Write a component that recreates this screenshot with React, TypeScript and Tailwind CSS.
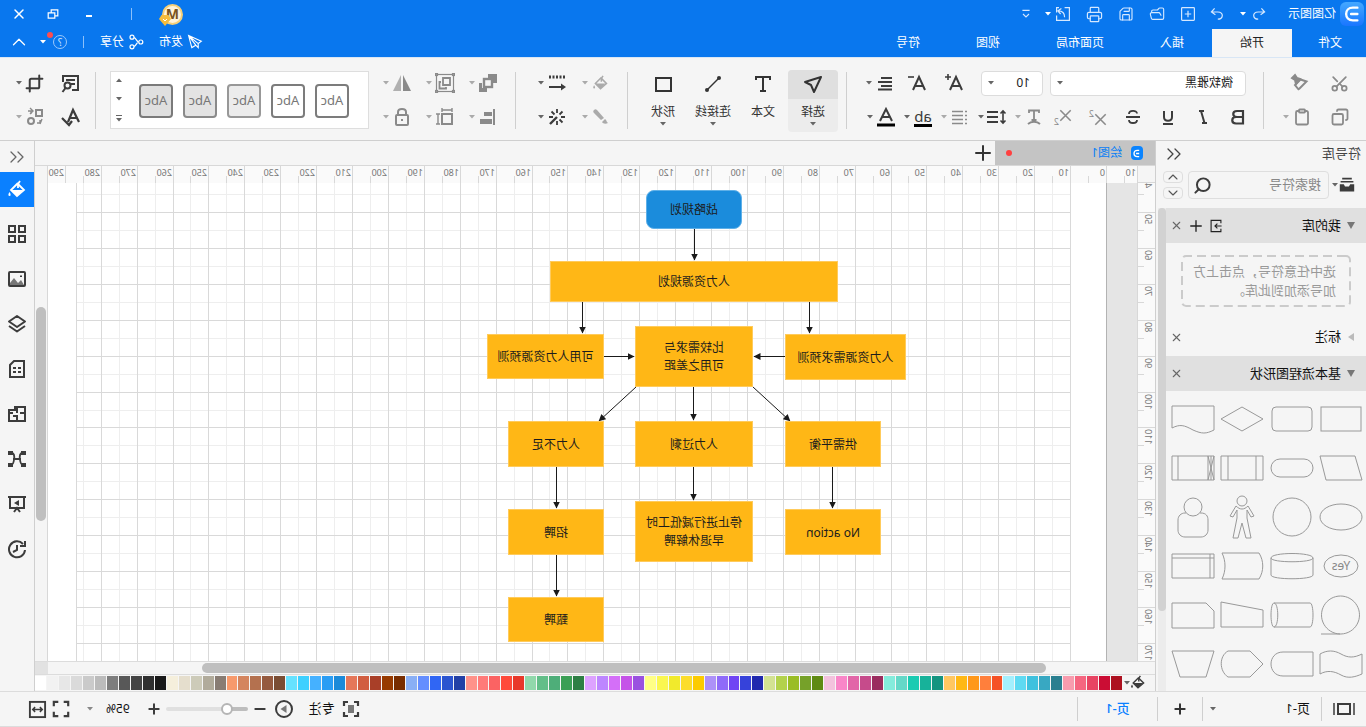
import type { ReactNode } from "react";
import {
  ChevronDown,
  ChevronsLeft,
  ChevronUp,
  Clipboard,
  Copy,
  Crop,
  FolderOpen,
  Minus,
  Plus,
  Printer,
  Save,
  Scissors,
  Search,
  X,
} from "lucide-react";

type IconProps = { children: ReactNode; className?: string; width?: number };

// All hand drawn icons share a 20x20 grid
function Icon({ children, className = "size-5", width = 2 }: IconProps) {
  return (
    <svg
      viewBox="0 0 20 20"
      fill="none"
      stroke="currentColor"
      strokeWidth={width}
      className={`shrink-0 ${className}`}
      aria-hidden="true"
    >
      {children}
    </svg>
  );
}

function Caret({ className = "text-[#666]" }: { className?: string }) {
  return (
    <svg
      viewBox="0 0 6 4"
      className={`w-[6px] h-[4px] shrink-0 ${className}`}
      fill="currentColor"
      aria-hidden="true"
    >
      <path d="M0 0h6L3 3.5z" />
    </svg>
  );
}

function Divider() {
  return <div className="w-px h-[57px] bg-[#cfcfcf] shrink-0" />;
}

/* ---------- icons ---------- */

const BucketIcon = ({ className }: { className?: string }) => (
  <Icon className={className} width={1.8}>
    <path d="M9 3l7 7-6 6-7-6 6-6" />
    <path d="M4 10h12l-6 6z" fill="currentColor" stroke="none" />
    <path d="M9 4L7 1M9 4v4" />
    <path d="M17.500 12c1.500 2 1.500 4 0 4s-1.500-2 0-4z" fill="currentColor" stroke="none" />
  </Icon>
);

const PainterIcon = () => (
  <Icon width={2}>
    <path d="M11 16L3.500 8.500 9.500 6.500 15 12l-4 5" />
    <path d="M10 6l3-1 2-3 3 3-3 2-1 4z" fill="currentColor" />
  </Icon>
);

const UndoIcon = () => (
  <Icon className="size-4" width={1.5}>
    <path d="M7 3L3 7.500l5 3.500M3.500 7.500H11c8 0 7 9 0 9" />
  </Icon>
);

const RedoIcon = () => (
  <Icon className="size-4" width={1.5}>
    <path d="M13 3l4 4.500-5 3.500M16.500 7.500H9c-8 0-7 9 0 9" />
  </Icon>
);

const NewIcon = () => (
  <Icon className="size-4" width={1.5}>
    <rect x="2" y="2" width="16" height="16" rx="1" />
    <path d="M10 6v8M6 10h8" />
  </Icon>
);

const ExportIcon = () => (
  <Icon className="size-4" width={1.5}>
    <path d="M8 2H2v16h16v-6M18 8V2h-3" />
    <path d="M8 14c0-6 3-8 8-8M12 3l4.500 3L13 10" />
  </Icon>
);

const SendIcon = () => (
  <Icon className="size-4" width={1.4}>
    <path d="M2 9l16-7-4 15-5-3-3 3v-5zM6 12l12-10-9 12" />
  </Icon>
);

const ShareIcon = () => (
  <Icon className="size-4" width={1.5}>
    <circle cx="4" cy="10" r="2.500" />
    <circle cx="15" cy="4" r="2.500" />
    <circle cx="15" cy="16" r="2.500" />
    <path d="M6.500 10c3 0 3-5 6-5.500M6.500 10c3 0 3 5 6 5.500" />
  </Icon>
);

const AlignTextIcon = () => (
  <Icon width={2}>
    <path d="M3 5h11M3 9h14M3 13h11M3 16.500h14" />
  </Icon>
);

const LineSpacingIcon = () => (
  <Icon width={2}>
    <path d="M9 5h11M9 10h11M9 15h11" />
    <path d="M4 4v12M1.500 6.500L4 4l2.500 2.500M1.500 13.500L4 16l2.500-2.500" strokeWidth={1.6} />
  </Icon>
);

const BulletsIcon = () => (
  <Icon width={1.6}>
    <path d="M7 4.500h11M7 8.500h11M7 12.500h11M7 16.500h11M3 4.500h2M3 8.500h2M3 12.500h2M3 16.500h2" />
  </Icon>
);

const TextArcIcon = () => (
  <Icon width={1.8}>
    <path d="M5 6V3.500h10V6M10 3.500V13M7.500 13h5M4 17c3-3 9-3 12 0" />
  </Icon>
);

const TextIcon = () => (
  <Icon width={2}>
    <path d="M3 6V3h14v3M10 3v14M7 17h6" />
  </Icon>
);

const SelectIcon = () => (
  <Icon width={2}>
    <path d="M2 3l16 5-6 3-3 7z" strokeLinejoin="round" />
  </Icon>
);

const ConnectorIcon = () => (
  <Icon width={1.5}>
    <path d="M4 4l12 12" />
    <circle cx="4" cy="4" r="2" fill="currentColor" stroke="none" />
    <circle cx="16" cy="16" r="2" fill="currentColor" stroke="none" />
  </Icon>
);

const RectIcon = () => (
  <Icon width={2}>
    <rect x="2" y="4" width="15" height="13" />
  </Icon>
);

const BrushIcon = () => (
  <Icon width={0}>
    <path d="M17 3c1 1 1 2 0 3l-7 7-3-2 7-8c1-1 2-1 3 0zM6 12l3 3c-1 2-4 2-6 1 2-1 1-3 3-4z" fill="currentColor" />
  </Icon>
);

const LineStyleIcon = () => (
  <Icon width={2}>
    <path d="M18 4H2" strokeWidth={3} strokeDasharray="2 1.500" />
    <path d="M18 14H4" />
    <path d="M6 10.500v7L1 14z" fill="currentColor" stroke="none" />
  </Icon>
);

const MagicIcon = () => (
  <Icon width={1.8}>
    <path d="M10 2v4M10 14v4M2 10h4M14 10h4M4.500 15.500l3-3M12.500 7.500l3-3M4.500 4.500l3 3" />
    <path d="M10 10l7 7" strokeWidth={2.4} />
  </Icon>
);

const ArrangeIcon = () => (
  <Icon width={2.4}>
    <rect x="6" y="6" width="8" height="8" />
    <path d="M1 1h9v4H5v5H1zM11 15h5v-5h3v9h-8z" fill="currentColor" stroke="none" />
  </Icon>
);

const GroupIcon = () => (
  <Icon width={1.2}>
    <rect x="1.500" y="1.500" width="17" height="17" />
    <g fill="#f5f5f5">
      <rect x="0.500" y="0.500" width="2" height="2" />
      <rect x="17.500" y="0.500" width="2" height="2" />
      <rect x="0.500" y="17.500" width="2" height="2" />
      <rect x="17.500" y="17.500" width="2" height="2" />
    </g>
    <path d="M5 5h7v7H5zM14 9h1.500v6.500H9V14" strokeWidth={1.8} />
  </Icon>
);

const FlipIcon = () => (
  <Icon width={0}>
    <path d="M9 2v16H1z" fill="#8a8a8a" />
    <path d="M11 2v16h8z" fill="#b0b0b0" />
  </Icon>
);

const AlignLeftEdgeIcon = () => (
  <Icon width={0}>
    <path d="M3 2h2v16H3zM6 5h8v4H6zM6 12h12v5H6z" fill="currentColor" />
  </Icon>
);

const SizeIcon = () => (
  <Icon width={2}>
    <rect x="3" y="7" width="10" height="10" />
    <path d="M3 1v4M13 1v4M3 3h10M15 7h4M15 17h4M17 7v10" strokeWidth={1.4} />
  </Icon>
);

const LockIcon = () => (
  <Icon width={2}>
    <rect x="4" y="8" width="12" height="10" rx="1" />
    <path d="M6 8V5c0-4 8-4 8 0v3M10 12v2" />
  </Icon>
);

const FindIcon = () => (
  <Icon width={2}>
    <path d="M9 17H3V3h15v6M6 7h9M6 11h4" />
    <circle cx="13.500" cy="12.500" r="3" />
    <path d="M15.500 15l3 4" />
  </Icon>
);

const SpellIcon = () => (
  <Icon width={2.2}>
    <path d="M2 15L8 3l5 12M4 11h8M9 14l3 4 7-7" />
  </Icon>
);

const SwapIcon = () => (
  <Icon width={2}>
    <rect x="3" y="3" width="6" height="6" />
    <circle cx="14" cy="14" r="3" />
    <path d="M14 7V4h3M15 1l-3 3 3 3M5 13v3h3M3 12l2 5" strokeWidth={1.4} />
  </Icon>
);

const ImportIcon = () => (
  <Icon className="size-[14px]" width={1.6}>
    <path d="M3 6V2h14v16H3v-4M2 10h9M8 6.500l3.500 3.500L8 13.500" />
  </Icon>
);

const DrawerIcon = () => (
  <Icon className="w-4 h-4" width={2}>
    <path d="M4 2h12M2 6h16" />
    <path d="M1 9h5l1.500 3h5L14 9h5v9H1z" fill="currentColor" stroke="none" />
  </Icon>
);

/* ---------- header ---------- */

function TitleBar() {
  const quick = [
    { label: "新建", icon: <NewIcon /> },
    { label: "打开", icon: <FolderOpen size={16} strokeWidth={1.7} /> },
    { label: "保存", icon: <Save size={16} strokeWidth={1.7} /> },
    { label: "打印", icon: <Printer size={17} strokeWidth={1.7} /> },
  ];
  return (
    <div className="flex items-center h-7 text-[#d5e8ff]">
      <div className="ml-[2px] size-6 rounded-md bg-linear-to-b from-[#45a8ff] to-[#1a75ff] flex items-center justify-center">
        <Icon className="size-[18px] text-white" width={2.6}>
          <path d="M4 3h5c10 0 10 14 0 14H4M4 10h7" strokeLinecap="round" />
        </Icon>
      </div>
      <h1 className="ml-1 text-white">亿图图示</h1>
      <button aria-label="撤销" className="ml-[21px]">
        <UndoIcon />
      </button>
      <Caret className="ml-[5px] text-white" />
      <button aria-label="恢复" className="ml-[15px]">
        <RedoIcon />
      </button>
      <div className="ml-[13px] flex items-center gap-[15px]">
        {quick.map((item) => (
          <button key={item.label} aria-label={item.label}>
            {item.icon}
          </button>
        ))}
        <button aria-label="导出" className="flex items-center gap-[4px]">
          <ExportIcon />
          <Caret className="text-white" />
        </button>
      </div>
      <button aria-label="更多" className="ml-[13px]">
        <Icon className="size-3" width={1.8}>
          <path d="M4 4h12M5 10l5 5 5-5" />
        </Icon>
      </button>

      {/* Account + window controls */}
      <div className="ml-auto flex items-center pr-[11px] text-white">
        <button
          aria-label="账户"
          className="relative size-[21px] rounded-full border-2 border-[#f5cf78] bg-[#fff3da] text-[#7a5520] font-bold text-sm leading-none"
        >
          M
          <svg viewBox="0 0 12 12" className="absolute -right-[5px] -bottom-[3px] size-[12px]">
            <path d="M2.500 1h7L12 5l-6 7-6-7z" fill="#f6bd3d" />
            <path d="M4 5l2 2 2-2" fill="none" stroke="#fff" />
          </svg>
        </button>
        <span className="ml-[30px] w-px h-3 bg-[#8cc0fa]" />
        <button aria-label="最小化" className="ml-[36px] flex w-3 justify-center">
          <span className="w-[6px] h-[2px] mt-1 bg-white" />
        </button>
        <button aria-label="还原" className="ml-[24px]">
          <Icon className="size-3" width={2}>
            <path d="M6 13H2V3h11v4M7 8h11v9H7z" />
          </Icon>
        </button>
        <button aria-label="关闭" className="ml-[20px]">
          <X size={16} strokeWidth={2.2} />
        </button>
      </div>
    </div>
  );
}

function TabBar() {
  const tabs = ["文件", "开始", "插入", "页面布局", "视图", "符号"];
  return (
    <nav className="flex items-stretch h-[29px] pt-px text-white">
      {tabs.map((tab, index) => (
        <button
          key={tab}
          className={
            index === 1
              ? "px-7 bg-[#f5f5f5] text-[#222]"
              : index === 0
                ? "pl-6 pr-[26px]"
                : "px-7"
          }
        >
          {tab}
        </button>
      ))}
      <div className="ml-auto flex items-center pr-[8px] pb-[3px]">
        <button className="flex items-center gap-[4px]">
          <SendIcon />
          发布
        </button>
        <button className="ml-[15px] flex items-center gap-[4px]">
          <ShareIcon />
          分享
        </button>
        <span className="ml-[16px] w-px h-3 bg-[#8cc0fa]" />
        <button
          aria-label="帮助"
          className="relative ml-[16px] size-[14px] rounded-full border border-[#9cc9fb] text-[10px] leading-none text-[#d5e8ff]"
        >
          ?
          <span className="absolute -right-[7px] -top-[4px] size-[6px] rounded-full bg-[#ff4d4f]" />
        </button>
        <Caret className="ml-[7px] text-white" />
        <button aria-label="收起功能区" className="ml-[10px]">
          <ChevronUp size={22} strokeWidth={1.4} />
        </button>
      </div>
    </nav>
  );
}

/* ---------- ribbon ---------- */

type ToolProps = {
  label: string;
  children: ReactNode;
  caret?: boolean;
  dim?: boolean;
  className?: string;
};

function Tool({ label, children, caret, dim, className = "" }: ToolProps) {
  return (
    <button
      aria-label={label}
      className={`flex items-center gap-[3px] h-[34px] shrink-0 ${dim ? "text-[#8a8a8a]" : "text-[#3c3c3c]"} ${className}`}
    >
      <span className="w-5 flex justify-center">{children}</span>
      {caret && <Caret className={dim ? "text-[#aaa]" : "text-[#666]"} />}
    </button>
  );
}

function BigTool({
  label,
  icon,
  active,
  caret,
}: {
  label: string;
  icon: ReactNode;
  active?: boolean;
  caret?: boolean;
}) {
  return (
    <button
      className={`w-[50px] h-[62px] flex flex-col items-center rounded-sm overflow-hidden text-[#333] ${active ? "bg-[#ececec]" : ""}`}
    >
      <span
        className={`w-full h-[29px] flex items-center justify-center shrink-0 ${active ? "bg-[#dfdfdf]" : ""}`}
      >
        {icon}
      </span>
      <span className="mt-[5px] leading-4">{label}</span>
      {caret && <Caret className="mt-[2px] text-[#666]" />}
    </button>
  );
}

function FontGroup() {
  return (
    <div className="flex flex-col w-[416px] pl-[17px] shrink-0">
      <div className="flex items-center h-[34px]">
        <label className="relative w-[196px]">
          <select
            aria-label="字体"
            className="w-full h-[25px] appearance-none bg-white border border-[#dcdcdc] rounded-sm pl-3 text-[#222]"
          >
            <option>微软雅黑</option>
          </select>
          <Caret className="absolute right-[7px] top-[10px] text-[#666]" />
        </label>
        <label className="relative w-[62px] ml-[7px]">
          <select
            aria-label="字号"
            className="w-full h-[25px] appearance-none bg-white border border-[#dcdcdc] rounded-sm pl-3 text-[#222]"
          >
            <option>10</option>
          </select>
          <Caret className="absolute right-[7px] top-[10px] text-[#666]" />
        </label>
        <Tool label="增大字号" className="ml-[17px]">
          <Icon width={2}>
            <path d="M2 17L8 4l6 13M4 13h8" />
            <path d="M13 4h6M16 1v6" strokeWidth={1.6} />
          </Icon>
        </Tool>
        <Tool label="减小字号" className="ml-[17px]">
          <Icon width={2}>
            <path d="M2 17L8 4l6 13M4 13h8" />
            <path d="M13 4h6" strokeWidth={1.6} />
          </Icon>
        </Tool>
        <Tool label="对齐" caret className="ml-[12px]">
          <AlignTextIcon />
        </Tool>
      </div>
      <div className="flex items-center h-[34px]">
        <div className="flex items-center gap-[15px] -ml-[2px]">
          <Tool label="加粗">
            <Icon width={2.2}>
              <path d="M5 4h6c5 0 5 6 0 6H5zM5 10h7c5 0 5 6.500 0 6.500H5z" />
            </Icon>
          </Tool>
          <Tool label="倾斜">
            <Icon width={2}>
              <path d="M9 4h5M6 16h5M12 4L8.500 16" />
            </Icon>
          </Tool>
          <Tool label="下划线">
            <Icon width={2}>
              <path d="M6 4v6c0 5 8 5 8 0V4M5 17h10" />
            </Icon>
          </Tool>
          <Tool label="删除线">
            <Icon width={1.8}>
              <path d="M14 7c0-4-8-4-8-.5M6 13c0 4 8 4 8 0M3 10h14" />
            </Icon>
          </Tool>
          <Tool label="上标" dim>
            <span className="flex items-start text-[9px] leading-none">
              <Icon className="size-[13px] mt-1" width={2.4}>
                <path d="M2 2l16 16M18 2L2 18" />
              </Icon>
              2
            </span>
          </Tool>
          <Tool label="下标" dim>
            <span className="flex items-end text-[9px] leading-none">
              <Icon className="size-[13px] mb-1" width={2.4}>
                <path d="M2 2l16 16M18 2L2 18" />
              </Icon>
              2
            </span>
          </Tool>
        </div>
        <div className="flex items-center gap-2 ml-[9px]">
          <Tool label="文字变形" caret dim>
            <TextArcIcon />
          </Tool>
          <Tool label="行距" caret>
            <LineSpacingIcon />
          </Tool>
          <Tool label="项目符号" caret dim>
            <BulletsIcon />
          </Tool>
          <Tool label="突出显示" caret>
            <span className="w-[18px] border-b-[3px] border-black text-[15px] leading-4">ab</span>
          </Tool>
          <Tool label="字体颜色" caret>
            <Icon width={2}>
              <path d="M4 14L10 2l6 12M6 10h8" />
              <path d="M1 18h18" stroke="#000" strokeWidth={3} />
            </Icon>
          </Tool>
        </div>
      </div>
    </div>
  );
}

function StyleGallery() {
  const styles = [
    "bg-white border-[#7c7c7c]",
    "bg-white border-[#7c7c7c]",
    "bg-[#ececec] border-[#989898]",
    "bg-[#e3e3e3] border-[#8a8a8a]",
    "bg-[#dfdfdf] border-[#7a7a7a]",
  ];
  return (
    <div className="ml-[14px] w-[259px] h-[58px] flex items-center bg-white border border-[#dedede] shrink-0">
      <div className="flex gap-[10px] ml-[19px] pt-[2px]">
        {styles.map((style, index) => (
          <button
            key={index}
            className={`size-[34px] rounded-[4px] border-2 text-[13px] text-[#777] ${style}`}
          >
            Abc
          </button>
        ))}
      </div>
      <div className="ml-auto mr-[5px] h-full flex flex-col items-center justify-between py-[6px] text-[#666]">
        <button aria-label="上一行">
          <Caret className="rotate-180" />
        </button>
        <button aria-label="下一行">
          <Caret />
        </button>
        <button aria-label="全部样式" className="border-t border-[#666] pt-[2px]">
          <Caret />
        </button>
      </div>
    </div>
  );
}

function Ribbon() {
  return (
    <div className="flex items-center h-[84px] pt-[2px] bg-[#f5f5f5] border-t border-b border-t-[#d8e6f5] border-b-[#cfcfcf]">
      <div className="w-[102px] pl-4 shrink-0">
        <div className="flex gap-5">
          <Tool label="剪切" dim>
            <Scissors size={19} strokeWidth={2.2} className="-rotate-90" />
          </Tool>
          <Tool label="格式刷" dim>
            <PainterIcon />
          </Tool>
        </div>
        <div className="flex gap-[18px]">
          <Tool label="复制" dim>
            <Copy size={18} strokeWidth={2.4} />
          </Tool>
          <Tool label="粘贴" dim caret>
            <Clipboard size={18} strokeWidth={2.4} />
          </Tool>
        </div>
      </div>
      <Divider />
      <FontGroup />
      <Divider />
      <div className="flex pl-2 pt-px w-[218px] shrink-0">
        <BigTool label="选择" icon={<SelectIcon />} active caret />
        <BigTool label="文本" icon={<TextIcon />} />
        <BigTool label="连接线" icon={<ConnectorIcon />} caret />
        <BigTool label="形状" icon={<RectIcon />} caret />
      </div>
      <Divider />
      <div className="w-[111px] pl-4 shrink-0 grid grid-cols-[44px_44px]">
        <Tool label="填充" dim caret>
          <BucketIcon className="size-[17px] text-[#aaa]" />
        </Tool>
        <Tool label="线条样式" caret>
          <LineStyleIcon />
        </Tool>
        <Tool label="画笔" dim caret>
          <span className="text-[#aaa]">
            <BrushIcon />
          </span>
        </Tool>
        <Tool label="特效" caret>
          <MagicIcon />
        </Tool>
      </div>
      <Divider />
      <div className="w-[132px] pl-[17px] shrink-0 grid grid-cols-[43px_43px_43px]">
        <Tool label="排列" dim caret>
          <ArrangeIcon />
        </Tool>
        <Tool label="组合" dim caret>
          <GroupIcon />
        </Tool>
        <Tool label="翻转" dim caret>
          <FlipIcon />
        </Tool>
        <Tool label="对齐形状" dim caret>
          <AlignLeftEdgeIcon />
        </Tool>
        <Tool label="尺寸" dim caret>
          <SizeIcon />
        </Tool>
        <Tool label="锁定" dim caret>
          <LockIcon />
        </Tool>
      </div>
      <StyleGallery />
      <div className="ml-[14px]">
        <Divider />
      </div>
      <div className="pl-[14px] grid grid-cols-[36px_36px]">
        <Tool label="查找">
          <FindIcon />
        </Tool>
        <Tool label="裁剪" caret>
          <Crop size={19} strokeWidth={2.5} />
        </Tool>
        <Tool label="拼写检查">
          <SpellIcon />
        </Tool>
        <Tool label="替换" dim caret>
          <SwapIcon />
        </Tool>
      </div>
    </div>
  );
}

/* ---------- symbol library ---------- */

const SHAPES: ReactNode[] = [
  <rect x="2" y="10" width="40" height="24" />,
  <rect x="2" y="10" width="40" height="24" rx="4" />,
  <path d="M1 22L22 10l21 12-21 12z" />,
  <path d="M1 9h42v22c-8-4-12-3-21 2-9 4-13 4-21 0z" />,
  <path d="M8 10h35l-6 24H1z" />,
  <rect x="1" y="13" width="42" height="18" rx="9" />,
  <path d="M1 10h42v24H1zM8 10v24M36 10v24" />,
  <path d="M1 10h42v24H1zM4 10v24M7 10v24M37 10v24M1 10l6 24M7 10L1 34" />,
  <ellipse cx="22" cy="22" rx="21" ry="13" />,
  <circle cx="22" cy="22" r="19" />,
  <>
    <circle cx="22" cy="6" r="5" />
    <path d="M16 11c4 4 8 4 12 0l6 10-3 1-4-7v8l4 20h-5l-4-15-4 15h-5l4-20v-8l-4 7-3-1z" />
  </>,
  <>
    <circle cx="22" cy="12" r="9" />
    <path d="M15 18h-1c-5 0-7 3-7 7v10c0 4 3 7 7 7h16c4 0 7-3 7-7V25c0-4-3-7-7-7h-1" />
  </>,
  <>
    <ellipse cx="22" cy="22" rx="17" ry="11" />
    <text x="22" y="26" textAnchor="middle" fontSize="12" fill="#888" stroke="none">
      Yes
    </text>
  </>,
  <path d="M1 14c0-6 42-6 42 0v17c0 5-42 5-42 0zM1 14c0 5 42 5 42 0" />,
  <path d="M5 9h37c-4 8-4 18 0 26H5c-5-8-5-18 0-26z" />,
  <path d="M1 10h42v24H1zM5 10v24M1 14h42" />,
  <path d="M22 41a19 19 0 1 1 1 0M22 41h20" />,
  <path d="M4 10h36c4 0 4 24 0 24H4c-4 0-4-24 0-24zM40 10c-5 0-5 24 0 24" />,
  <path d="M43 9v25H1V17z" />,
  <path d="M9 10h34v25H1V18z" />,
  <path d="M1 12c8 4 14 4 21 0s14-4 21 0v20c-7-4-14-3-21 1s-14 2-21-1z" />,
  <path d="M1 10h30c16 0 16 24 0 24H1z" />,
  <path d="M14 9h22c9 5 9 20 0 26H14L1 22z" />,
  <path d="M1 9h42l-8 26H9z" />,
];

function SectionHeader({ title, tools }: { title: string; tools?: boolean }) {
  return (
    <div className="flex items-center h-[35px] pl-[11px] pr-[4px] bg-[#e0e0e0] text-[13px] text-[#111]">
      <svg viewBox="0 0 8 7" className="w-2 h-[7px]" fill="#777">
        <path d="M0 0h8L4 7z" />
      </svg>
      <h3 className="ml-[6px]">{title}</h3>
      <div className="ml-auto flex items-center text-[#222]">
        {tools && (
          <>
            <button aria-label="导入" className="mr-[4px]">
              <ImportIcon />
            </button>
            <button aria-label="添加" className="mr-[4px]">
              <Plus size={18} strokeWidth={1.8} />
            </button>
          </>
        )}
        <button aria-label={`关闭${title}`}>
          <X size={13} className="text-[#666]" />
        </button>
      </div>
    </div>
  );
}

function Library() {
  return (
    <aside className="w-[211px] shrink-0 flex flex-col border-r border-[#cfcfcf] bg-[#f5f5f5] overflow-hidden">
      <div className="flex items-center justify-between h-[26px] pl-[5px] pr-[6px] text-[13px] text-[#444]">
        <h2>符号库</h2>
        <button aria-label="折叠">
          <ChevronsLeft size={24} strokeWidth={1.3} />
        </button>
      </div>
      <div className="flex items-center h-[41px] pb-[5px] pl-[11px] shrink-0">
        <button aria-label="库分类" className="flex items-center gap-px w-[26px] text-[#3c3c3c]">
          <DrawerIcon />
          <Caret />
        </button>
        <div className="flex items-center w-[141px] h-7 border border-[#dedede] rounded-sm pl-[7px] pr-[4px]">
          <input
            aria-label="搜索符号"
            placeholder="搜索符号"
            className="w-full min-w-0 bg-transparent text-[13px] outline-none placeholder:text-[#888]"
          />
          <Search size={19} strokeWidth={2.5} className="shrink-0 text-[#3c3c3c]" />
        </div>
        <div className="ml-[5px] flex flex-col gap-1 text-[#555]">
          <button aria-label="向上" className="w-5 h-3 border border-[#dedede] rounded-sm flex items-center justify-center">
            <ChevronUp size={16} strokeWidth={1.6} />
          </button>
          <button aria-label="向下" className="w-5 h-3 border border-[#dedede] rounded-sm flex items-center justify-center">
            <ChevronDown size={16} strokeWidth={1.6} />
          </button>
        </div>
      </div>
      <div className="flex flex-1 min-h-0">
        <div className="w-[200px] overflow-hidden">
          <SectionHeader title="我的库" tools />
          <div className="relative mt-3 mb-[13px] mx-[15px] h-[52px] px-[15px] py-[7px] text-[13px] leading-[19px] text-[#999]">
            <svg className="absolute inset-0 w-full h-full" aria-hidden="true">
              <rect
                x="1"
                y="1"
                width="168"
                height="50"
                rx="4"
                fill="none"
                stroke="#cbcbcb"
                strokeWidth="2"
                strokeDasharray="9 5"
              />
            </svg>
            <p className="whitespace-nowrap">选中任意符号，点击上方</p>
            <p className="whitespace-nowrap">加号添加到此库。</p>
          </div>
          <div className="flex items-center h-9 pl-[12px] pr-[4px] pb-[2px] text-[13px] text-[#111]">
            <svg viewBox="0 0 6 8" className="w-[6px] h-2" fill="#bbb">
              <path d="M0 0v8l6-4z" />
            </svg>
            <h3 className="ml-[7px]">标注</h3>
            <button aria-label="关闭标注" className="ml-auto">
              <X size={13} className="text-[#666]" />
            </button>
          </div>
          <SectionHeader title="基本流程图形状" />
          <div className="grid grid-cols-4 w-[198px] pt-[3px]">
            {SHAPES.map((shape, index) => (
              <div key={index} className="h-[49px] flex items-center justify-center">
                <svg viewBox="0 0 44 44" className="size-[44px]" fill="none" stroke="#999">
                  {shape}
                </svg>
              </div>
            ))}
          </div>
        </div>
        <div className="w-2 bg-[#ececec]">
          <div className="h-[403px] rounded-full bg-[#d2d2d2]" />
        </div>
      </div>
    </aside>
  );
}

/* ---------- drawing area ---------- */

const UNIT = 35.9;
const ORIGIN_X = 30;
const ORIGIN_Y = 29;

const range = (from: number, to: number) =>
  Array.from({ length: to - from + 1 }, (_, i) => from + i);

const at = (offset: number, n: number) => Math.round(offset + n * UNIT);

function HorizontalRuler() {
  return (
    <svg className="flex-1 min-w-0 h-[17px] bg-[#fafafa]" shapeRendering="crispEdges">
      {range(-1, 29).map((n) => (
        <g key={n}>
          <rect x={at(ORIGIN_X, n)} width="1" height="17" fill="#d8d8d8" />
          <rect x={at(ORIGIN_X + 18, n)} y="10" width="1" height="7" fill="#d8d8d8" />
          <text x={Math.max(at(ORIGIN_X, n) + 2, 1)} y="10" fontSize="9" fill="#777">
            {Math.abs(n * 10)}
          </text>
        </g>
      ))}
    </svg>
  );
}

function VerticalRuler() {
  return (
    <svg className="w-[18px] h-full shrink-0 bg-[#fafafa] border-r border-[#d8d8d8]" shapeRendering="crispEdges">
      {range(4, 17).map((n) => (
        <g key={n}>
          <rect y={at(ORIGIN_Y, n - 5)} width="18" height="1" fill="#d8d8d8" />
          <rect x="11" y={at(ORIGIN_Y + 18, n - 5)} width="7" height="1" fill="#d8d8d8" />
          <text
            transform={`translate(10 ${at(ORIGIN_Y, n - 5) + 2}) rotate(-90)`}
            textAnchor="end"
            fontSize="9"
            fill="#777"
          >
            {n * 10}
          </text>
        </g>
      ))}
    </svg>
  );
}

function Grid() {
  return (
    <svg className="absolute inset-0 w-full h-full" shapeRendering="crispEdges">
      <rect width="30" height="100%" fill="#e5e5e5" />
      <rect x="30" width="1" height="100%" fill="#b3b3b3" />
      {range(1, 28).map((n) => (
        <rect key={n} x={at(ORIGIN_X + 18, n)} width="1" height="100%" fill="#eeeeee" />
      ))}
      {range(-1, 12).map((n) => (
        <rect key={n} x="66" y={at(ORIGIN_Y + 18, n)} width="995" height="1" fill="#eeeeee" />
      ))}
      {range(1, 28).map((n) => (
        <rect key={n} x={at(ORIGIN_X, n)} width="1" height="100%" fill="#d9d9d9" />
      ))}
      {range(0, 12).map((n) => (
        <rect key={n} x="66" y={at(ORIGIN_Y, n)} width="995" height="1" fill="#d9d9d9" />
      ))}
      <rect x="1060" width="1" height="100%" fill="#d9d9d9" />
    </svg>
  );
}

const NODES = [
  { lines: ["战略规划"], x: 395, y: 7, w: 96, h: 39, blue: true },
  { lines: ["人力资源规划"], x: 299, y: 78, w: 288, h: 41 },
  { lines: ["人力资源需求预测"], x: 231, y: 151, w: 121, h: 46 },
  { lines: ["比较需求与", "可用之差距"], x: 384, y: 143, w: 118, h: 61 },
  { lines: ["可用人力资源预测"], x: 533, y: 151, w: 117, h: 45 },
  { lines: ["供需平衡"], x: 256, y: 238, w: 96, h: 46 },
  { lines: ["人力过剩"], x: 384, y: 238, w: 118, h: 46 },
  { lines: ["人力不足"], x: 533, y: 238, w: 96, h: 46 },
  { lines: ["No action"], x: 256, y: 326, w: 96, h: 46 },
  { lines: ["停止进行减低工时", "早退休解聘"], x: 384, y: 318, w: 118, h: 61 },
  { lines: ["招聘"], x: 533, y: 326, w: 96, h: 46 },
  { lines: ["甄聘"], x: 533, y: 414, w: 96, h: 45 },
];

const LINKS = [
  "M442.5 46V77",
  "M327.5 119V150",
  "M554.5 119V150",
  "M352 173.5H383",
  "M533 173.5H503",
  "M384 204L347 238",
  "M501 204L538 238",
  "M443.5 204V237",
  "M443.5 284V317",
  "M304.5 284V325",
  "M580.5 284V325",
  "M580.5 372V413",
];

function Canvas() {
  return (
    <div className="relative flex-1 min-w-0 overflow-hidden bg-white">
      <Grid />
      <svg className="absolute inset-0 w-full h-full" fill="none" stroke="#1a1a1a">
        <defs>
          <marker id="arrow" viewBox="0 0 7 7" refX="6.5" refY="3.5" markerWidth="7" markerHeight="7" orient="auto">
            <path d="M0 0L7 3.500 0 7z" fill="#1a1a1a" stroke="none" />
          </marker>
        </defs>
        {LINKS.map((d) => (
          <path key={d} d={d} markerEnd="url(#arrow)" />
        ))}
      </svg>
      {NODES.map((node) => (
        <div
          key={node.lines[0]}
          className={`absolute flex flex-col items-center justify-center pt-px border leading-[18px] text-[#1c1c1c] whitespace-nowrap ${
            node.blue
              ? "bg-[#1b8cdc] border-[#5fb0e8] rounded-lg"
              : "bg-[#ffb716] border-[#ffcb5c]"
          }`}
          style={{ left: node.x, top: node.y, width: node.w, height: node.h }}
        >
          {node.lines.map((line) => (
            <span key={line}>{line}</span>
          ))}
        </div>
      ))}
    </div>
  );
}

const PALETTE =
  "ad1120 cb0d34 e84463 f56680 f89cae 2a7f90 38a8c2 3fc1de 5fdaf2 a3effd f55126 ff7f3c ff981a ffb815 ffc761 149480 17b29a 1bcbb2 65d8c8 84ecdc 9a2c5e c64b8b e266a8 f986c8 f3c2dd 5f8a13 76a129 9abd25 b3d24c d3e292 2028ae 3642da 7045f4 8f6bf9 ad91f8 fccb00 fcdd2b f1ea2c faf750 ffff86 9a51e0 c553e8 d46ff8 bd86ff dda2ff 2e7f44 3b9f55 4eae79 62be88 91d8ab e8382a ff4a3b fb6363 ff7a79 ff928a 2240a6 2b54d0 3066f4 648eff 89aff5 782d00 973a00 a93f28 d15d40 e5775a 1b8ad9 2a9df4 45b1ff 3dd0ff 66e2ff 7a4d33 955a3f b4714f d4855f f79a6c 887c73 b1ab9b cdcbb9 e5decd f5efdc 191919 303030 444444 585858 7d7d7d bbbbbb cacaca dadada e7e7e7 f2f2f2 ffffff".split(
    " ",
  );

function Workspace() {
  return (
    <main className="flex-1 min-w-0 flex flex-col">
      {/* Document tabs */}
      <div className="flex items-center h-6 bg-[#f5f5f5]">
        <div className="flex items-center w-40 h-full pl-3 bg-[#c4c4c4] text-[#0a80f5]">
          <span className="w-3 h-[14px] rounded-sm bg-[#0a84ff] flex items-center justify-center">
            <Icon className="size-[9px] text-white" width={3}>
              <path d="M4 3h4c10 0 10 14 0 14H4M4 10h7" />
            </Icon>
          </span>
          <span className="ml-[9px]">绘图1</span>
          <span className="ml-auto mr-[11px] size-[6px] rounded-full bg-[#ff4040]" />
        </div>
        <button aria-label="新建绘图" className="text-[#333]">
          <Plus size={24} strokeWidth={2} />
        </button>
      </div>

      <div className="flex flex-1 min-h-0 border-t border-[#d8d8d8]">
        <div className="flex-1 min-w-0 flex flex-col">
          <div className="flex h-[17px] border-b border-[#d8d8d8] shrink-0">
            <div className="w-[18px] shrink-0 bg-[#f5f5f5] border-r border-[#d8d8d8]" />
            <HorizontalRuler />
          </div>
          <div className="flex flex-1 min-h-0">
            <VerticalRuler />
            <Canvas />
          </div>
        </div>
        <div className="w-[13px] shrink-0 bg-[#f5f5f5] border-l border-[#d8d8d8] px-px">
          <div className="mt-[141px] h-[214px] rounded-full bg-[#bfbfbf]" />
        </div>
      </div>

      <div className="flex h-[14px] border-t border-b border-[#dcdcdc] shrink-0">
        <div className="flex-1 flex items-center">
          <div className="ml-[109px] mr-[154px] flex-1 h-[10px] rounded-full bg-[#bfbfbf]" />
        </div>
        <div className="w-[13px] bg-[#e2e2e2]" />
      </div>

      <div className="flex items-center h-[16px] shrink-0">
        <button aria-label="填充颜色" className="flex items-center w-[33px] pl-[9px] shrink-0 text-[#3c3c3c]">
          <BucketIcon className="size-4" />
          <Caret />
        </button>
        <div className="flex flex-1 gap-px">
          {PALETTE.map((color) => (
            <button
              key={color}
              aria-label={`#${color}`}
              className="flex-1 h-[14px]"
              style={{ backgroundColor: `#${color}` }}
            />
          ))}
        </div>
      </div>
    </main>
  );
}

/* ---------- side tool strip ---------- */

function ToolStrip() {
  const items = [
    {
      label: "主题",
      icon: (
        <Icon width={2}>
          <path d="M2 2h6v6H2zM12 2h6v6h-6zM2 12h6v6H2zM12 12h6v6h-6z" />
        </Icon>
      ),
    },
    {
      label: "图片",
      icon: (
        <Icon width={2}>
          <rect x="2" y="3" width="16" height="14" rx="1" />
          <path d="M3 16l3-5 3 3 4-5 4 5v2z" fill="#777" stroke="none" />
          <path d="M6 6.500v1.500" />
        </Icon>
      ),
    },
    {
      label: "图层",
      icon: (
        <Icon width={2}>
          <path d="M10 2l8 5.500-8 5.500-8-5.500zM2 12l8 5.500 8-5.500" strokeLinejoin="round" />
        </Icon>
      ),
    },
    {
      label: "页面",
      icon: (
        <Icon width={2}>
          <path d="M3 2h10l4 4v12H3zM6 9h3M11 9h3M6 13h3M11 13h3" />
        </Icon>
      ),
    },
    {
      label: "平面图",
      icon: (
        <Icon width={2}>
          <path d="M2 3h10v3h6v11H2zM2 9h5M10 3v6M10 17v-5h4M14 9h4" />
        </Icon>
      ),
    },
    {
      label: "脑图",
      icon: (
        <Icon width={1.8}>
          <path d="M5 4c4 0 2 12-1 12M15 4c-4 0-2 12 1 12M6 10h8" />
          <path d="M1 2h5v4H1zM14 2h5v4h-5zM1 14h5v4H1zM14 14h5v4h-5z" fill="currentColor" stroke="none" />
        </Icon>
      ),
    },
    {
      label: "演示",
      icon: (
        <Icon width={2}>
          <path d="M1 3h18M3 3v11h14V3M7 18l3-4 3 4" />
          <path d="M8 6v6l5-3z" fill="currentColor" stroke="none" />
        </Icon>
      ),
    },
    {
      label: "历史",
      icon: (
        <Icon width={2}>
          <path d="M4 5a8 8 0 1 1-2 6M2 2v5h5M10 6v5l4 2" />
        </Icon>
      ),
    },
  ];
  return (
    <aside className="w-[35px] shrink-0 border-l border-[#cfcfcf] bg-[#f5f5f5] flex flex-col items-center text-[#3c3c3c]">
      <button aria-label="展开" className="h-[31px] shrink-0 text-[#666]">
        <ChevronsLeft size={24} strokeWidth={1.3} />
      </button>
      <button
        aria-label="样式"
        className="w-full h-[35px] shrink-0 bg-[#0a80ff] text-white flex items-center justify-center"
      >
        <BucketIcon />
      </button>
      <div className="mt-1 flex flex-col">
        {items.map((item) => (
          <button key={item.label} aria-label={item.label} className="h-[45px] flex items-center justify-center">
            {item.icon}
          </button>
        ))}
      </div>
    </aside>
  );
}

/* ---------- status bar ---------- */

function StatusBar() {
  return (
    <footer className="flex items-center h-9 shrink-0 bg-[#f5f5f5] border-t border-b border-[#dcdcdc] text-[13px] text-[#111]">
      <div className="flex items-center w-[209px] h-6 shrink-0 border-r border-[#cfcfcf]">
        <button aria-label="页面视图" className="w-[45px] h-full flex items-center justify-center border-r border-[#cfcfcf] text-[#3c3c3c]">
          <svg viewBox="0 0 22 14" className="w-[22px] h-[14px]" fill="none" stroke="currentColor" strokeWidth="2">
            <path d="M1 1v12M21 1v12" strokeWidth="1.500" />
            <rect x="5" y="2" width="12" height="10" />
          </svg>
        </button>
        <button className="flex-1 h-full flex items-center justify-between pl-[11px] pr-[7px] border-r border-[#cfcfcf]">
          页-1
          <Caret />
        </button>
        <button aria-label="添加页面" className="w-[44px] flex justify-center text-[#333]">
          <Plus size={16} strokeWidth={3} />
        </button>
      </div>
      <button className="w-20 h-6 border-r border-[#cfcfcf] text-[#0a80ff] font-medium">页-1</button>

      <div className="ml-auto flex items-center pr-[28px] text-[#3c3c3c]">
        <button className="flex items-center gap-[6px] text-[#3c3c3c]">
          <Icon width={2.2}>
            <path d="M3 7V3h4M13 3h4v4M17 13v4h-4M7 17H3v-4" />
            <rect x="7" y="6" width="6" height="8" fill="#777" stroke="none" />
          </Icon>
          <span className="text-[#111]">专注</span>
        </button>
        <button aria-label="播放" className="ml-[15px]">
          <Icon width={2}>
            <circle cx="10" cy="10" r="8" />
            <path d="M7.500 6v8l6-4z" fill="#777" stroke="none" />
          </Icon>
        </button>
        <button aria-label="缩小" className="ml-[6px]">
          <Minus size={16} strokeWidth={3} />
        </button>
        <input
          type="range"
          aria-label="缩放"
          min="0"
          max="440"
          defaultValue="95"
          className="ml-[4px] w-[82px] h-1 appearance-none rounded-full bg-linear-to-r from-[#bdbdbd] from-25% to-[#e0e0e0] to-25% [&::-webkit-slider-thumb]:appearance-none [&::-webkit-slider-thumb]:size-3 [&::-webkit-slider-thumb]:rounded-full [&::-webkit-slider-thumb]:bg-white [&::-webkit-slider-thumb]:border-2 [&::-webkit-slider-thumb]:border-[#b5b5b5]"
        />
        <button aria-label="放大" className="ml-[4px]">
          <Plus size={16} strokeWidth={3} />
        </button>
        <span className="ml-[16px] text-xs text-[#111]">95%</span>
        <Caret className="ml-[13px] text-[#888]" />
        <button aria-label="全屏" className="ml-[17px]">
          <Icon className="size-[18px]" width={2.4}>
            <path d="M2 7V2h5M13 2h5v5M18 13v5h-5M7 18H2v-5" />
          </Icon>
        </button>
        <button aria-label="适应宽度" className="ml-[5px]">
          <Icon className="size-[19px]" width={2}>
            <rect x="2" y="2" width="16" height="16" />
            <path d="M5 10h10M7.500 7.500L5 10l2.500 2.500M12.500 7.500L15 10l-2.500 2.500" strokeWidth={1.6} />
          </Icon>
        </button>
      </div>
    </footer>
  );
}

// The whole window is drawn mirrored
export default function App() {
  return (
    <div className="h-screen flex flex-col overflow-hidden -scale-x-100 bg-[#f5f5f5] text-xs font-['Noto_Sans','Noto_Sans_CJK_SC',sans-serif]">
      <header className="bg-[#0977ee] shrink-0">
        <TitleBar />
        <TabBar />
      </header>
      <Ribbon />
      <div className="flex flex-1 min-h-0">
        <Library />
        <Workspace />
        <ToolStrip />
      </div>
      <StatusBar />
    </div>
  );
}
